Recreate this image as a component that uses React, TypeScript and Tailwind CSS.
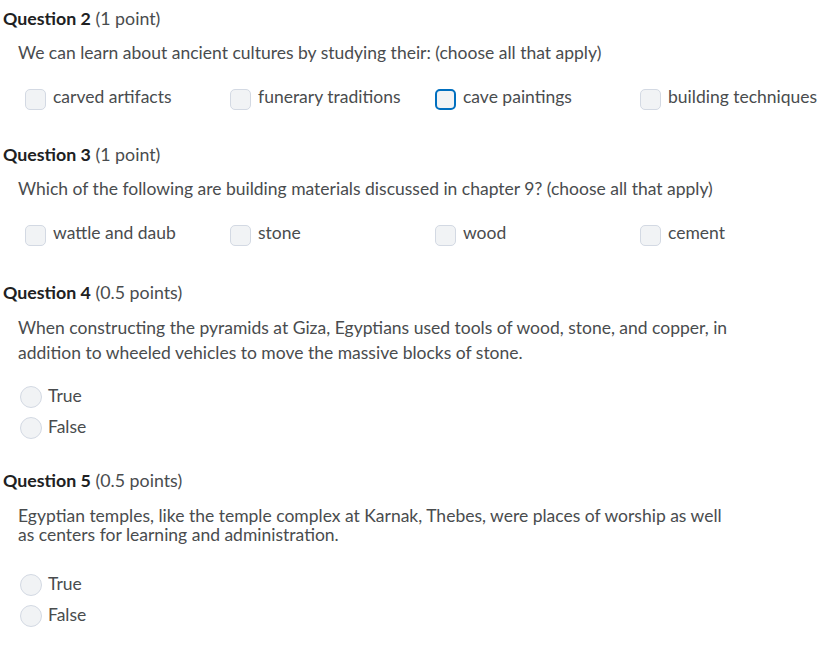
const checkQs = [
  {
    n: 2,
    pts: "1 point",
    text: "We can learn about ancient cultures by studying their: (choose all that apply)",
    opts: ["carved artifacts", "funerary traditions", "cave paintings", "building techniques"],
    focus: 2,
  },
  {
    n: 3,
    pts: "1 point",
    text: "Which of the following are building materials discussed in chapter 9? (choose all that apply)",
    opts: ["wattle and daub", "stone", "wood", "cement"],
    focus: -1,
  },
];

function Heading({ n, pts }: { n: number; pts: string }) {
  return (
    <div className="pl-[3px] leading-[36px] text-[17.8px] text-[#494c4e]">
      <span className="font-bold text-[#202122]">Question {n}</span> ({pts})
    </div>
  );
}

function Checkbox({ focus }: { focus?: boolean }) {
  return (
    <span
      className={
        focus
          ? "mt-[3px] h-[21px] w-[21px] shrink-0 rounded-[5px] border-2 border-[#006fbf] bg-[#f1f3f5]"
          : "mt-[3px] h-[21px] w-[21px] shrink-0 rounded-[5px] border border-[#d3d9e3] bg-[#f1f3f5]"
      }
    />
  );
}

function Radio({ label }: { label: string }) {
  return (
    <div className="flex h-[31px] items-center pl-[20px]">
      <span className="h-[22px] w-[22px] shrink-0 rounded-full border border-[#d3d9e3] bg-[#f1f3f5]" />
      <span className="ml-[6px] text-[17.5px]">{label}</span>
    </div>
  );
}

export default function App() {
  return (
    <div
      className="w-[832px] h-[655px] bg-white text-[#494c4e] overflow-hidden"
      style={{ fontFamily: "Lato, 'Open Sans', sans-serif" }}
    >
      {checkQs.map((q) => (
        <section key={q.n} className="pb-[26px]">
          <Heading n={q.n} pts={q.pts} />
          <p className="mt-[4px] pl-[18px] text-[17.5px] leading-[25px]">{q.text}</p>
          <div className="mt-[21px] grid grid-cols-[205px_205px_205px_1fr] pl-[25px]">
            {q.opts.map((o, i) => (
              <label key={o} className="flex h-[24px] items-start">
                <Checkbox focus={i === q.focus} />
                <span className="ml-[7px] text-[17.5px] leading-[22px] whitespace-nowrap">{o}</span>
              </label>
            ))}
          </div>
        </section>
      ))}

      <section className="pt-[2px]">
        <Heading n={4} pts="0.5 points" />
        <p className="mt-[5px] w-[745px] pl-[18px] text-[17.5px] leading-[25px]">
          When constructing the pyramids at Giza, Egyptians used tools of wood, stone, and copper, in
          addition to wheeled vehicles to move the massive blocks of stone.
        </p>
        <div className="mt-[16px]">
          <Radio label="True" />
          <Radio label="False" />
        </div>
      </section>

      <section className="mt-[19px]">
        <Heading n={5} pts="0.5 points" />
        <p className="mt-[8px] w-[730px] pl-[18px] text-[17.5px] leading-[19px]">
          Egyptian temples, like the temple complex at Karnak, Thebes, were places of worship as well
          as centers for learning and administration.
        </p>
        <div className="mt-[25px]">
          <Radio label="True" />
          <Radio label="False" />
        </div>
      </section>
    </div>
  );
}
